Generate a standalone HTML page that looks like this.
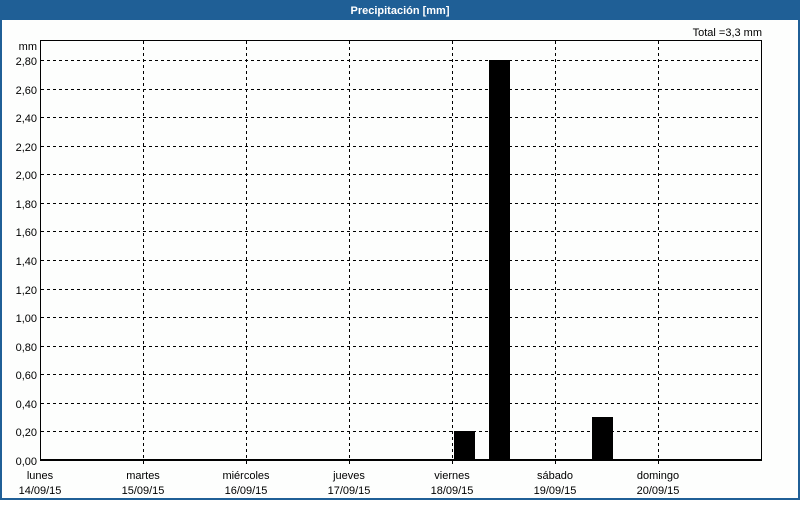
<!DOCTYPE html><html><head><style>
body{margin:0;width:800px;height:500px;overflow:hidden;background:#fff;font-family:"Liberation Sans",sans-serif}
</style></head><body>
<svg width="800" height="500" xmlns="http://www.w3.org/2000/svg" font-family="Liberation Sans, sans-serif" font-size="11">
<rect x="0" y="0" width="800" height="500" fill="#1f5f96"/>
<rect x="2" y="20" width="796" height="478" fill="#fdfefd"/>
<text x="400" y="14" fill="#fff" font-weight="bold" text-anchor="middle">Precipitación [mm]</text>
<text x="762" y="36" text-anchor="end" fill="#000">Total =3,3 mm</text>
<text x="37" y="50" text-anchor="end">mm</text>
<g stroke="#000" stroke-dasharray="3,3" stroke-width="1">
<line x1="41" x2="761" y1="60.5" y2="60.5"/><line x1="41" x2="761" y1="89.5" y2="89.5"/><line x1="41" x2="761" y1="117.5" y2="117.5"/><line x1="41" x2="761" y1="146.5" y2="146.5"/><line x1="41" x2="761" y1="174.5" y2="174.5"/><line x1="41" x2="761" y1="203.5" y2="203.5"/><line x1="41" x2="761" y1="231.5" y2="231.5"/><line x1="41" x2="761" y1="260.5" y2="260.5"/><line x1="41" x2="761" y1="289.5" y2="289.5"/><line x1="41" x2="761" y1="317.5" y2="317.5"/><line x1="41" x2="761" y1="346.5" y2="346.5"/><line x1="41" x2="761" y1="374.5" y2="374.5"/><line x1="41" x2="761" y1="403.5" y2="403.5"/><line x1="41" x2="761" y1="431.5" y2="431.5"/>
<line x1="143.5" x2="143.5" y1="41" y2="466"/><line x1="246.5" x2="246.5" y1="41" y2="466"/><line x1="349.5" x2="349.5" y1="41" y2="466"/><line x1="452.5" x2="452.5" y1="41" y2="466"/><line x1="555.5" x2="555.5" y1="41" y2="466"/><line x1="658.5" x2="658.5" y1="41" y2="466"/>
</g>
<rect x="40.5" y="40.5" width="721" height="420" fill="none" stroke="#000" stroke-width="1"/>
<line x1="40" x2="762" y1="460" y2="460" stroke="#000" stroke-width="2"/>
<rect x="454" y="431" width="21" height="29" fill="#000"/>
<rect x="489" y="60" width="21" height="400" fill="#000"/>
<rect x="592" y="417" width="21" height="43" fill="#000"/>
<g text-anchor="end">
<text x="37" y="65">2,80</text><text x="37" y="94">2,60</text><text x="37" y="122">2,40</text><text x="37" y="151">2,20</text><text x="37" y="179">2,00</text><text x="37" y="208">1,80</text><text x="37" y="236">1,60</text><text x="37" y="265">1,40</text><text x="37" y="294">1,20</text><text x="37" y="322">1,00</text><text x="37" y="351">0,80</text><text x="37" y="379">0,60</text><text x="37" y="408">0,40</text><text x="37" y="436">0,20</text><text x="37" y="465">0,00</text>
</g>
<g text-anchor="middle">
<text x="40" y="479">lunes</text><text x="40" y="494">14/09/15</text>
<text x="143" y="479">martes</text><text x="143" y="494">15/09/15</text>
<text x="246" y="479">miércoles</text><text x="246" y="494">16/09/15</text>
<text x="349" y="479">jueves</text><text x="349" y="494">17/09/15</text>
<text x="452" y="479">viernes</text><text x="452" y="494">18/09/15</text>
<text x="555" y="479">sábado</text><text x="555" y="494">19/09/15</text>
<text x="658" y="479">domingo</text><text x="658" y="494">20/09/15</text>
</g>
</svg>
</body></html>
